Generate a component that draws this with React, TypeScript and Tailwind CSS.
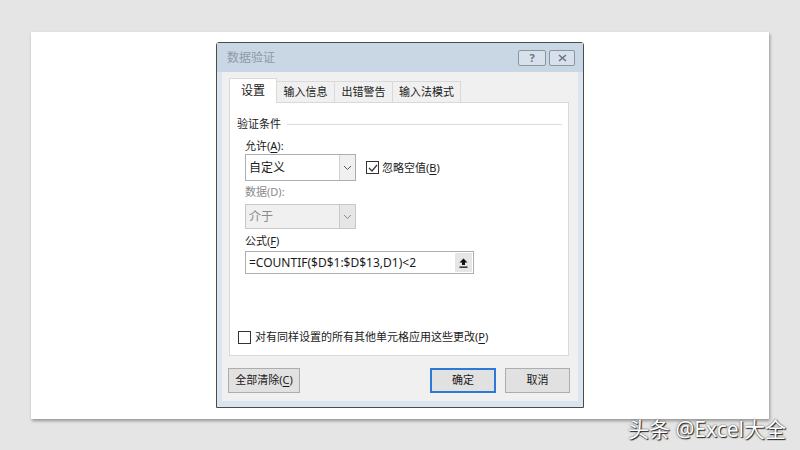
const ui = { fontFamily: '"Noto Sans", "Noto Sans CJK SC", sans-serif' }

function Chevron({ color = '#5a5a5a' }: { color?: string }) {
  return (
    <svg width="9" height="6" viewBox="0 0 9 6">
      <path d="M1 1 L4.5 4.5 L8 1" fill="none" stroke={color} strokeWidth="1" />
    </svg>
  )
}

function Combo({ value, disabled }: { value: string; disabled?: boolean }) {
  return (
    <div
      className={`flex w-[111px] border ${disabled ? 'h-[25px] border-[#c8c8c8] bg-[#f0f0f0] text-[#8a8a8a]' : 'h-[27px] border-[#abadb3] bg-white text-[#1a1a1a]'}`}
    >
      <div className="flex flex-1 items-center pl-[3px] text-[12px]">{value}</div>
      <div
        className={`flex w-[16px] items-center justify-center border-l ${disabled ? 'border-[#c8c8c8] bg-[#e6e6e6]' : 'border-[#d0d0d0] bg-[#f0f0f0]'}`}
      >
        <Chevron color={disabled ? '#8a8a8a' : '#5a5a5a'} />
      </div>
    </div>
  )
}

function Key({ k }: { k: string }) {
  return (
    <>
      (<span className="underline underline-offset-2">{k}</span>)
    </>
  )
}

function Box({ checked }: { checked?: boolean }) {
  return (
    <div className="flex h-[13px] w-[13px] items-center justify-center border border-[#333] bg-white">
      {checked && (
        <svg width="10" height="8" viewBox="0 0 10 8">
          <path d="M1 4 L4 7 L9 1" fill="none" stroke="#333" strokeWidth="1.2" />
        </svg>
      )}
    </div>
  )
}

function Tab({ label, active, w }: { label: string; active?: boolean; w: string }) {
  return active ? (
    <div
      className={`relative z-10 -mb-px flex h-[25px] items-center justify-center border border-b-0 border-[#d9d9d9] bg-white text-[12px] text-[#1a1a1a] ${w}`}
    >
      {label}
    </div>
  ) : (
    <div
      className={`mt-[3px] flex h-[21px] items-center justify-center border border-b-0 border-l-0 border-[#d9d9d9] bg-[#f0f0f0] text-[11px] text-[#1a1a1a] ${w}`}
    >
      {label}
    </div>
  )
}

function Btn({ label, w, primary }: { label: React.ReactNode; w: string; primary?: boolean }) {
  return (
    <div
      className={`flex h-[25px] items-center justify-center text-[11px] text-[#1a1a1a] ${w} ${primary ? 'border-2 border-[#2b7ad6] bg-[#e1e1e1]' : 'border border-[#adadad] bg-[#e1e1e1]'}`}
    >
      {label}
    </div>
  )
}

export default function App() {
  return (
    <div className="relative h-[450px] w-[800px] overflow-hidden bg-[#e5e5e5] pl-[31px] pt-[32px]" style={ui}>
      <div className="h-[387px] w-[738px] bg-white pl-[185px] pt-[10px] shadow-[1px_2px_3px_rgba(0,0,0,0.35)]">
        {/* dialog */}
        <div className="flex h-[366px] w-[368px] flex-col rounded-t-[3px] border border-[#4a4a4a] bg-[#dae4ef]">
          <div className="flex h-[29px] items-center justify-between bg-[#c9d6e4] pl-[10px] pr-[8px]">
            <span className="text-[12px] text-[#8d99a6]">数据验证</span>
            <div className="flex gap-[3px]">
              <div className="flex h-[16px] w-[28px] items-center justify-center rounded-[2px] border border-[#8a95a2] bg-[#d8e1eb] text-[11px] font-bold leading-none text-[#6b7480]">
                ?
              </div>
              <div className="flex h-[16px] w-[26px] items-center justify-center rounded-[2px] border border-[#8a95a2] bg-[#d8e1eb]">
                <svg width="9" height="8" viewBox="0 0 9 8">
                  <path d="M1 1 L8 7 M8 1 L1 7" stroke="#6b7480" strokeWidth="1.6" />
                </svg>
              </div>
            </div>
          </div>
          <div className="mx-[5px] mb-[6px] flex flex-1 flex-col bg-[#f0f0f0] px-[7px] pt-[6px]">
            {/* tabs */}
            <div className="flex items-end">
              <Tab label="设置" active w="w-[48px]" />
              <Tab label="输入信息" w="w-[58px]" />
              <Tab label="出错警告" w="w-[58px]" />
              <Tab label="输入法模式" w="w-[68px]" />
            </div>
            {/* panel */}
            <div className="h-[254px] w-[340px] border border-[#d9d9d9] bg-white pl-[7px] pr-[6px] text-[11px] leading-[16px] text-[#1a1a1a]">
              <div className="mt-[13px] flex items-center gap-[6px]">
                <span>验证条件</span>
                <div className="h-px flex-1 bg-[#dcdcdc]" />
              </div>
              <div className="pl-[8px]">
                <div className="mt-[6px]">
                  允许<Key k="A" />:
                </div>
                <div className="flex items-center gap-[10px]">
                  <Combo value="自定义" />
                  <div className="flex items-center gap-[3px]">
                    <Box checked />
                    <span>
                      忽略空值<Key k="B" />
                    </span>
                  </div>
                </div>
                <div className="mt-[3px] text-[#8a8a8a]">数据(D):</div>
                <div className="mt-[4px]">
                  <Combo value="介于" disabled />
                </div>
                <div className="mt-[4px]">
                  公式<Key k="F" />
                </div>
                <div className="mt-[2px] flex h-[23px] w-[229px] border border-[#abadb3] bg-white">
                  <div className="flex flex-1 items-center pl-[3px] text-[12px]">=COUNTIF($D$1:$D$13,D1)&lt;2</div>
                  <div className="m-px flex w-[17px] items-center justify-center bg-[#e6e6e6]">
                    <svg width="9" height="10" viewBox="0 0 9 10">
                      <path d="M4.5 0.5 L8.5 4.5 L6 4.5 L6 7 L3 7 L3 4.5 L0.5 4.5 Z" fill="#111" />
                      <rect x="0.5" y="8.5" width="8" height="1.3" fill="#111" />
                    </svg>
                  </div>
                </div>
              </div>
              <div className="mt-[55px] flex items-center gap-[4px] pl-[1px]">
                <Box />
                <span>
                  对有同样设置的所有其他单元格应用这些更改<Key k="P" />
                </span>
              </div>
            </div>
            {/* buttons */}
            <div className="mt-[12px] flex items-center">
              <div className="-ml-px">
                <Btn
                  w="w-[72px]"
                  label={
                    <>
                      全部清除<Key k="C" />
                    </>
                  }
                />
              </div>
              <div className="ml-auto flex gap-[9px] pr-px">
                <Btn w="w-[66px]" label="确定" primary />
                <Btn w="w-[65px]" label="取消" />
              </div>
            </div>
          </div>
        </div>
      </div>
      <div
        className="absolute bottom-[5px] right-[14px] text-[21px] text-white"
        style={{ textShadow: '1px 1px 1px #222, 0 0 2px #444' }}
      >
        头条 @Excel大全
      </div>
    </div>
  )
}
